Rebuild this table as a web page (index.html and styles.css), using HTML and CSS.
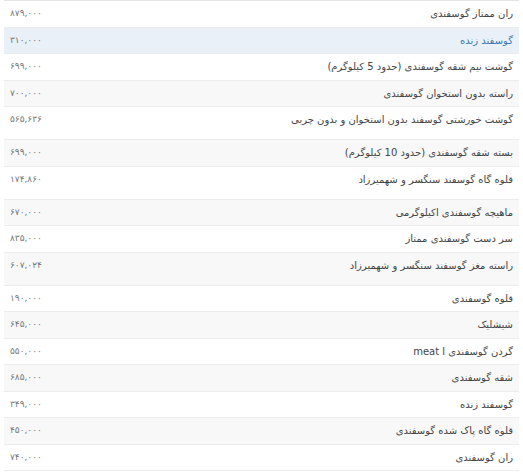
FILE: index.html
```html
<!DOCTYPE html>
<html lang="fa" dir="rtl">
<head>
<meta charset="utf-8">
<link rel="stylesheet" href="styles.css">
</head>
<body>
<div class="wrap">
<table class="prices">
<tbody>
<tr><td class="name">ران ممتاز گوسفندی</td><td class="price">۸۷۹,۰۰۰</td></tr>
<tr class="active"><td class="name"><a href="#">گوسفند زنده</a></td><td class="price">۳۱۰,۰۰۰</td></tr>
<tr><td class="name">گوشت نیم شقه گوسفندی (حدود 5 کیلوگرم)</td><td class="price">۶۹۹,۰۰۰</td></tr>
<tr><td class="name">راسته بدون استخوان گوسفندی</td><td class="price">۷۰۰,۰۰۰</td></tr>
<tr class="tall"><td class="name">گوشت خورشتی گوسفند بدون استخوان و بدون چربی</td><td class="price">۵۶۵,۶۳۶</td></tr>
<tr><td class="name">بسته شقه گوسفندی (حدود 10 کیلوگرم)</td><td class="price">۶۹۹,۰۰۰</td></tr>
<tr class="tall"><td class="name">قلوه گاه گوسفند سنگسر و شهمیرزاد</td><td class="price">۱۷۴,۸۶۰</td></tr>
<tr><td class="name">ماهیچه گوسفندی اکیلوگرمی</td><td class="price">۶۷۰,۰۰۰</td></tr>
<tr><td class="name">سر دست گوسفندی ممتاز</td><td class="price">۸۳۵,۰۰۰</td></tr>
<tr class="tall"><td class="name">راسته مغز گوسفند سنگسر و شهمیرزاد</td><td class="price">۶۰۷,۰۲۴</td></tr>
<tr><td class="name">قلوه گوسفندی</td><td class="price">۱۹۰,۰۰۰</td></tr>
<tr><td class="name">شیشلیک</td><td class="price">۶۴۵,۰۰۰</td></tr>
<tr><td class="name">گردن گوسفندی meat l</td><td class="price">۵۵۰,۰۰۰</td></tr>
<tr><td class="name">شقه گوسفندی</td><td class="price">۶۸۵,۰۰۰</td></tr>
<tr><td class="name">گوسفند زنده</td><td class="price">۳۴۹,۰۰۰</td></tr>
<tr><td class="name">قلوه گاه پاک شده گوسفندی</td><td class="price">۴۵۰,۰۰۰</td></tr>
<tr><td class="name">ران گوسفندی</td><td class="price">۷۴۰,۰۰۰</td></tr>
</tbody>
</table>
</div>
</body>
</html>
```
FILE: styles.css
```css
html, body {
  margin: 0;
  padding: 0;
  background: #ffffff;
}
body {
  font-family: "DejaVu Sans", "Noto Sans", sans-serif;
  color: #444444;
}
.wrap {
  padding: 0 4px;
}
.prices {
  width: 100%;
  border-collapse: collapse;
  border-top: 1px solid #e4e4e4;
}
.prices td {
  padding: 5px 6px;
  line-height: 15.5px;
  vertical-align: top;
  border-bottom: 1px solid #ececec;
}
.prices tr:nth-child(even) td {
  background: #f8f8f8;
}
.prices tr.active td {
  background: #e9f0f8;
}
.name {
  text-align: right;
  font-size: 10px;
}
.name a {
  color: #3b78b5;
  text-decoration: none;
}
.price {
  text-align: left;
  font-size: 9px;
  color: #777;
  width: 120px;
}
.prices tr.tall td {
  padding-bottom: 11.5px;
}
```
